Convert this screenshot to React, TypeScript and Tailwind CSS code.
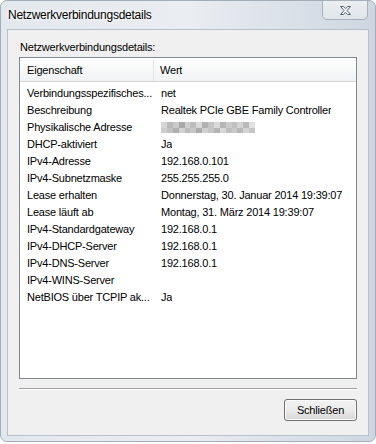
import React from "react";

const rows: [string, string][] = [
  ["Verbindungsspezifisches...", "net"],
  ["Beschreibung", "Realtek PCIe GBE Family Controller"],
  ["Physikalische Adresse", ""],
  ["DHCP-aktiviert", "Ja"],
  ["IPv4-Adresse", "192.168.0.101"],
  ["IPv4-Subnetzmaske", "255.255.255.0"],
  ["Lease erhalten", "Donnerstag, 30. Januar 2014 19:39:07"],
  ["Lease läuft ab", "Montag, 31. März 2014 19:39:07"],
  ["IPv4-Standardgateway", "192.168.0.1"],
  ["IPv4-DHCP-Server", "192.168.0.1"],
  ["IPv4-DNS-Server", "192.168.0.1"],
  ["IPv4-WINS-Server", ""],
  ["NetBIOS über TCPIP ak...", "Ja"],
];

// blurred MAC address, drawn as a mosaic
const mosaic = [
  "#d6d6d6", "#b9b9b9", "#c9c9c9", "#a8a8a8", "#cfcfcf", "#bdbdbd", "#d9d9d9", "#b2b2b2",
  "#c4c4c4", "#dadada", "#b6b6b6", "#cbcbcb", "#c0c0c0", "#d4d4d4", "#bababa", "#e0e0e0",
  "#cdcdcd", "#c2c2c2", "#b0b0b0", "#d2d2d2", "#bcbcbc", "#c8c8c8", "#adadad", "#d0d0d0",
  "#c6c6c6", "#b4b4b4", "#d8d8d8", "#bfbfbf", "#cacaca", "#b8b8b8", "#d3d3d3", "#c5c5c5",
];

function Blurred() {
  return (
    <div className="grid h-[11px] w-[94px] grid-cols-16 grid-rows-2">
      {mosaic.map((c, i) => (
        <div key={i} style={{ backgroundColor: c }} />
      ))}
    </div>
  );
}

function CloseGlyph() {
  return (
    <svg width="13" height="11" viewBox="0 0 13 11">
      <path
        d="M1.5 1.5h3l2 2.2 2-2.2h3L8 5.5l3.5 4h-3l-2-2.2-2 2.2h-3L5 5.5z"
        fill="#f4f6f8"
        stroke="#5b6470"
        strokeWidth="1"
        strokeLinejoin="round"
      />
    </svg>
  );
}

export default function App() {
  return (
    <div className="h-[444px] w-[376px] overflow-hidden bg-white font-['Liberation_Sans',Arial,sans-serif] text-[11px] tracking-[-0.2px] text-black">
      <div className="flex h-[442px] w-[376px] flex-col rounded-[7px] border border-[#a3adb8] bg-gradient-to-r from-[#e3e8ee] via-[#eaedf1] to-[#cdd6e1] px-[6px] pb-[5px]">
        <div className="flex h-[29px] items-start justify-between">
          <div className="pl-[1px] pt-[6px] text-[12px] leading-[16px] tracking-[-0.25px] [text-shadow:0_0_6px_#fff,0_0_3px_#fff]">
            Netzwerkverbindungsdetails
          </div>
          <div className="-mt-px mr-[1px] flex h-[20px] w-[46px] items-center justify-center rounded-b-[5px] border border-[#a7b0bb] bg-gradient-to-b from-[#ebeef2] to-[#e0e5eb]">
            <CloseGlyph />
          </div>
        </div>

        <div className="flex flex-1 flex-col border border-[#b7c0ca] bg-[#f0f0f0] px-[11px] pb-[14px] pt-[10px]">
          <div className="pl-[1px] leading-[15px]">Netzwerkverbindungsdetails:</div>

          <div className="mt-[2px] h-[322px] border border-[#828790] bg-white">
            <div className="flex h-[24px] border-b border-[#d5d5d5] bg-gradient-to-b from-white to-[#f1f2f4] pt-[2px]">
              <div className="flex w-[134px] shrink-0 items-center border-r border-[#e2e4e7] pl-[7px]">
                Eigenschaft
              </div>
              <div className="flex flex-1 items-center pl-[6px]">Wert</div>
            </div>
            <div className="pt-[3px]">
              {rows.map(([k, v]) => (
                <div key={k} className="flex h-[17px] items-center leading-[17px]">
                  <div className="w-[134px] shrink-0 overflow-hidden pl-[7px] whitespace-nowrap">{k}</div>
                  <div className="min-w-0 overflow-hidden pl-[7px] whitespace-nowrap">
                    {k === "Physikalische Adresse" ? <Blurred /> : v}
                  </div>
                </div>
              ))}
            </div>
          </div>

          <div className="mt-[9px] h-[2px] border-t border-b border-t-[#a0a0a0] border-b-white" />

          <div className="mt-[9px] flex justify-end">
            <button className="h-[22px] w-[73px] rounded-[3px] border border-[#707070] bg-gradient-to-b from-[#f2f2f2] via-[#ebebeb] to-[#d6d6d6] leading-[18px] shadow-[inset_0_0_0_1px_#fcfcfc]">
              Schließen
            </button>
          </div>
        </div>
      </div>
    </div>
  );
}
